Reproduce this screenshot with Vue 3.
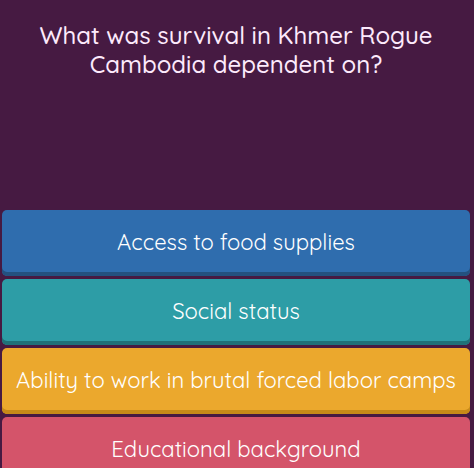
<script setup>
import { ref } from 'vue';

const question = 'What was survival in Khmer Rogue Cambodia dependent on?';

const answers = [
  { id: 1, text: 'Access to food supplies', color: 'blue' },
  { id: 2, text: 'Social status', color: 'teal' },
  { id: 3, text: 'Ability to work in brutal forced labor camps', color: 'yellow' },
  { id: 4, text: 'Educational background', color: 'pink' },
];

const selected = ref(null);
</script>

<template>
  <main class="quiz">
    <header class="question">
      <h1>{{ question }}</h1>
    </header>

    <div class="answers">
      <button
        v-for="answer in answers"
        :key="answer.id"
        type="button"
        class="answer"
        :class="answer.color"
        :aria-pressed="selected === answer.id"
        @click="selected = answer.id"
      >
        {{ answer.text }}
      </button>
    </div>
  </main>
</template>

<style>
body {
  margin: 0;
  background-color: #461a42;
}
</style>

<style scoped>
.quiz {
  height: 100vh;
  overflow: hidden;
  background-color: #461a42;
  font-family: Quicksand, Inter, sans-serif;
}

.question {
  box-sizing: border-box;
  min-height: 210px;
  padding: 21px 24px 0 22px;
}

.question h1 {
  margin: 0;
  color: #fdeafc;
  font-size: 24px;
  font-weight: 500;
  line-height: 29px;
  text-align: center;
}

.answers {
  display: flex;
  flex-direction: column;
  gap: 3px;
  padding: 0 4px 3px 2px;
}

.answer {
  min-height: 66px;
  padding: 0 8px 2px;
  border: 0;
  border-radius: 5px;
  color: #fff;
  font-family: inherit;
  font-size: 22px;
  font-weight: 450;
  line-height: 28px;
  text-align: center;
  cursor: pointer;
}

.blue {
  background-color: #2f6dae;
  box-shadow: inset 0 -4px #24517f;
}

.teal {
  background-color: #2d9da6;
  box-shadow: inset 0 -4px #207178;
}

.yellow {
  background-color: #eba82d;
  box-shadow: inset 0 -4px #c78a18;
}

.pink {
  background-color: #d4546a;
  box-shadow: inset 0 -4px #a83a4f;
}
</style>
